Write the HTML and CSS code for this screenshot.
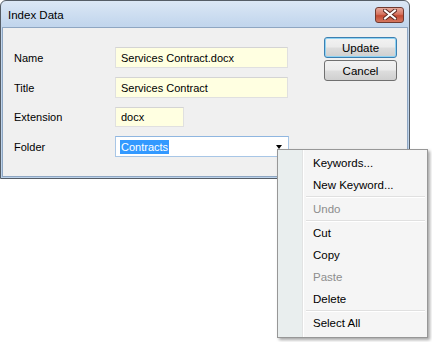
FILE: index.html
```html
<!DOCTYPE html>
<html lang="en">
<head>
  <meta charset="UTF-8" />
  <title>Index Data</title>
  <link rel="stylesheet" href="styles.css">
</head>
<body>

<div class="window">
  <div class="titlebar">
    <span class="title">Index Data</span>
    <span class="close">
      <svg width="14" height="11" viewBox="0 0 14 11">
        <path d="M2 1.5 L12 9.5 M12 1.5 L2 9.5" stroke="#5a2a22" stroke-width="4" stroke-linecap="square" fill="none"/>
        <path d="M2 1.5 L12 9.5 M12 1.5 L2 9.5" stroke="#ffffff" stroke-width="2" stroke-linecap="square" fill="none"/>
      </svg>
    </span>
  </div>

  <div class="dialog-body">
    <div class="fields">
      <div class="row">
        <label>Name</label>
        <div class="field wide">Services Contract.docx</div>
      </div>
      <div class="row">
        <label>Title</label>
        <div class="field wide">Services Contract</div>
      </div>
      <div class="row">
        <label>Extension</label>
        <div class="field short">docx</div>
      </div>
      <div class="row">
        <label>Folder</label>
        <div class="combo">
          <span class="selected">Contracts</span>
          <span class="arrow"></span>
        </div>
      </div>
    </div>

    <div class="buttons">
      <button class="default">Update</button>
      <button>Cancel</button>
    </div>
  </div>
</div>

<!-- Context menu opened over the folder box -->
<ul class="menu">
  <li>Keywords...</li>
  <li>New Keyword...</li>
  <li class="sep"></li>
  <li class="disabled">Undo</li>
  <li class="sep"></li>
  <li>Cut</li>
  <li>Copy</li>
  <li class="disabled">Paste</li>
  <li>Delete</li>
  <li class="sep"></li>
  <li>Select All</li>
</ul>

</body>
</html>
```

FILE: styles.css
```css
body {
  margin: 0;
  font-family: 'Liberation Sans', Arial, sans-serif;
  font-size: 11px;
  color: #000;
  background-color: #fff;
}

.window {
  width: 410px;
  height: 179px;
  box-sizing: border-box;
  border: 1px solid #555d66;
  border-radius: 6px 6px 0 0;
  background: linear-gradient(#dbe7f5, #c2d6ed 24px, #bcd2ea);
  padding: 0 1px 1px 1px;
  display: flex;
  flex-direction: column;
}

.titlebar {
  height: 26px;
  display: flex;
  align-items: center;
  padding: 0 4px 0 6px;
}

.title {
  flex: 1;
  font-size: 11.5px;
  padding-top: 1px;
}

.close {
  width: 29px;
  height: 16px;
  margin-top: 1px;
  box-sizing: border-box;
  border: 1px solid #6f3a30;
  border-radius: 3px;
  background: linear-gradient(#e6a99c, #d6735f 45%, #c24a33 55%, #d5775f);
  display: flex;
  align-items: center;
  justify-content: center;
}

.close svg {
  display: block;
}

.dialog-body {
  flex: 1;
  background-color: #f0f0f0;
  border: 1px solid #8ea6c2;
  display: flex;
  padding: 9px 0 0 11px;
}

.fields {
  display: flex;
  flex-direction: column;
  gap: 9px;
  margin-top: 10px;
}

.row {
  display: flex;
  align-items: center;
}

.row label {
  width: 101px;
}

.field {
  height: 21px;
  box-sizing: border-box;
  border: 1px solid #e0e0e0;
  border-top-color: #d4d4d4;
  background-color: #ffffe1;
  padding: 0 5px;
  display: flex;
  align-items: center;
}

.field.wide {
  width: 173px;
}

.field.short {
  width: 69px;
  height: 20px;
}

.combo {
  width: 174px;
  height: 21px;
  box-sizing: border-box;
  border: 1px solid #a8c6e6;
  border-top-color: #8fb6e0;
  background-color: #fff;
  padding: 0 4px;
  display: flex;
  align-items: center;
  position: relative;
}

.selected {
  background-color: #3399ff;
  color: #fff;
  padding: 0 1px;
  line-height: 14px;
}

.arrow {
  position: absolute;
  right: 6px;
  top: 8px;
  width: 0;
  height: 0;
  border-left: 3.5px solid transparent;
  border-right: 3.5px solid transparent;
  border-top: 4px solid #000;
}

.buttons {
  display: flex;
  flex-direction: column;
  gap: 2px;
  margin-left: 35px;
}

.buttons button {
  width: 73px;
  height: 21px;
  border: 1px solid #707070;
  border-radius: 3px;
  background: linear-gradient(#f2f2f2, #ebebeb 48%, #dddddd 52%, #cfcfcf);
  font-family: inherit;
  font-size: 11.5px;
  color: #000;
  padding: 0;
}

.buttons button.default {
  border-color: #3c7fb1;
  box-shadow: inset 0 0 0 1px #8fd3f3;
}

.menu {
  position: absolute;
  left: 277px;
  top: 149px;
  width: 151px;
  box-sizing: border-box;
  margin: 0;
  padding: 2px 2px 3px 2px;
  list-style: none;
  border: 1px solid #979797;
  background: linear-gradient(to right, #e9eeee 24px, #e2e3e3 24px, #e2e3e3 25px, #fff 25px, #fff 26px, #f5f5f5 26px);
  box-shadow: 2px 2px 3px rgba(0, 0, 0, 0.35);
  font-size: 11.5px;
}

.menu li {
  height: 22px;
  line-height: 23px;
  padding-left: 33px;
}

.menu li.disabled {
  color: #8d8d8d;
}

.menu li.sep {
  height: 1px;
  margin-left: 26px;
  border-top: 1px solid #e0e0e0;
  background-color: #fff;
  padding: 0;
}
```
